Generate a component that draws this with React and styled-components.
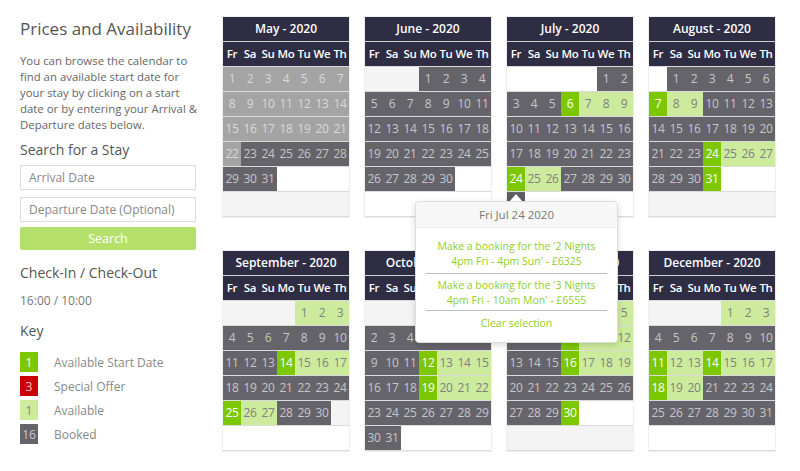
import React from 'react';
import styled, { createGlobalStyle } from 'styled-components';

const GlobalStyle = createGlobalStyle`
  body {
    margin: 0;
    background: #fff;
    font-family: "Open Sans", "Noto Sans", sans-serif;
  }
`;

const Page = styled.div`
  display: flex;
  gap: 27px;
  padding: 17px 0 0 20px;
  width: 800px;
  height: 471px;
  box-sizing: border-box;
  overflow: hidden;
`;

const Sidebar = styled.aside`
  width: 176px;
  flex-shrink: 0;
  color: #666;
`;

const Title = styled.h1`
  margin: 0 0 12px;
  font-size: 17px;
  font-weight: 400;
  color: #555;
  line-height: 24px;
`;

const Intro = styled.p`
  margin: 0 -3px 7px 0;
  font-size: 11.4px;
  line-height: 16px;
  color: #666;
`;

const Heading = styled.h2`
  margin: ${(p) => p.$m || '0'};
  font-size: 14px;
  font-weight: 400;
  color: #555;
  line-height: 20px;
`;

const Field = styled.div`
  height: 25px;
  border: 1px solid #ddd;
  box-sizing: border-box;
  margin-bottom: ${(p) => p.$gap}px;
  padding: 0 8px;
  font-size: 12px;
  line-height: 23px;
  color: #888;
`;

const SearchButton = styled.button`
  display: block;
  width: 100%;
  height: 23px;
  border: none;
  border-radius: 2px;
  background: #b5e06a;
  color: #fff;
  font-family: inherit;
  font-size: 12.5px;
  padding: 0;
`;

const Times = styled.div`
  font-size: 12px;
  line-height: 16px;
  color: #777;
  margin: 0 0 12px;
`;

const KeyList = styled.ul`
  list-style: none;
  margin: 0;
  padding: 0;
  display: flex;
  flex-direction: column;
  gap: 4px;
`;

const KeyRow = styled.li`
  display: flex;
  align-items: center;
  gap: 16px;
  font-size: 12px;
  color: #888;
`;

const colors = {
  start: { bg: '#7cc700', fg: '#fff' },
  offer: { bg: '#cc0008', fg: '#f3c9c9' },
  avail: { bg: '#cdeb9c', fg: '#808080' },
  booked: { bg: '#66646b', fg: '#c6c6c8' },
  past: { bg: '#a4a4a4', fg: '#d9d9d9' },
  empty: { bg: '#f4f4f4', fg: '#f4f4f4' },
  blank: { bg: '#fff', fg: '#fff' },
};

const Swatch = styled.span`
  width: 18px;
  height: 20px;
  display: flex;
  align-items: center;
  justify-content: center;
  background: ${(p) => colors[p.$kind].bg};
  color: ${(p) => colors[p.$kind].fg};
  font-size: 12px;
`;

const Calendars = styled.div`
  position: relative;
  display: grid;
  grid-template-columns: repeat(4, 126px);
  column-gap: 16px;
  row-gap: 34px;
  align-content: start;
`;

const Month = styled.div`
  width: 126px;
  box-shadow: 0 0 0 1px #eee;
`;

const MonthTitle = styled.div`
  height: 24px;
  border-bottom: 1px solid #d0d0d4;
  background: #2e2d44;
  color: #fff;
  font-size: 12px;
  font-weight: 600;
  text-align: center;
  line-height: 24px;
`;

const Week = styled.div`
  display: grid;
  grid-template-columns: repeat(7, 18px);
  height: 24px;
  border-bottom: 1px solid #dadada;
`;

const DayName = styled.div`
  background: #2e2d44;
  color: #fff;
  font-size: 11.5px;
  font-weight: 600;
  text-align: center;
  line-height: 24px;
  letter-spacing: -0.3px;
`;

const Day = styled.div`
  background: ${(p) => colors[p.$kind].bg};
  color: ${(p) => colors[p.$kind].fg};
  font-size: 12px;
  text-align: center;
  line-height: 24px;
  letter-spacing: -0.3px;
`;

const Popover = styled.div`
  position: absolute;
  left: 192px;
  top: 184px;
  width: 201px;
  background: #fff;
  border: 1px solid #ddd;
  border-radius: 4px;
  box-shadow: 0 2px 6px rgba(0, 0, 0, 0.15);
  z-index: 2;
`;

const Notch = styled.div`
  position: absolute;
  left: 284px;
  top: 176px;
  width: 18px;
  height: 8px;
  background: #5e5c63;
  z-index: 3;
  &::after {
    content: '';
    position: absolute;
    left: 3px;
    bottom: 0;
    border-left: 6px solid transparent;
    border-right: 6px solid transparent;
    border-bottom: 7px solid #fff;
  }
`;

const PopoverTitle = styled.div`
  height: 25px;
  background: #f7f7f7;
  border-bottom: 1px solid #eee;
  border-radius: 4px 4px 0 0;
  font-size: 11.5px;
  color: #777;
  text-align: center;
  line-height: 25px;
`;

const PopoverBody = styled.div`
  padding: 11px 10px 9px;
  display: flex;
  flex-direction: column;
`;

const Option = styled.a`
  display: block;
  color: #8fcf2a;
  font-size: 10.5px;
  line-height: 15px;
  text-align: center;
  padding: ${(p) => (p.$first ? '0 0 4px' : '4px 0 2px')};
  border-bottom: ${(p) => (p.$last ? 'none' : '1px solid #bbb')};
  text-decoration: none;
  ${(p) => p.$last && 'padding-top: 5px;'}
`;

const monthsData = [
  { name: 'May', start: 0, days: 31, fill: ['', '', '', '', 'blank', 'empty'],
    past: [1, 22], start_: [], avail: [] },
  { name: 'June', start: 3, days: 30, fill: ['empty', '', '', '', 'blank', 'blank'],
    start_: [], avail: [] },
  { name: 'July', start: 5, days: 31, fill: ['blank', '', '', '', 'blank', 'blank'],
    start_: [6, 24], avail: [7, 8, 9, 25, 26] },
  { name: 'August', start: 1, days: 31, fill: ['blank', '', '', '', 'blank', 'empty'],
    start_: [7, 24, 31], avail: [8, 9, 25, 26, 27] },
  { name: 'September', start: 4, days: 30, fill: ['empty', '', '', '', 'empty', 'blank'],
    start_: [14, 25], avail: [1, 2, 3, 15, 16, 17, 26, 27] },
  { name: 'October', start: 6, days: 31, fill: ['empty', '', '', '', '', 'blank'],
    start_: [12, 19], avail: [13, 14, 15, 20, 21, 22] },
  { name: 'November', start: 2, days: 30, fill: ['blank', '', '', '', 'blank', 'empty'],
    start_: [2, 9, 16, 30], avail: [1, 3, 4, 5, 10, 11, 12, 17, 18, 19] },
  { name: 'December', start: 4, days: 31, fill: ['empty', '', '', '', '', 'blank'],
    start_: [11, 14, 18], avail: [1, 2, 3, 12, 13, 15, 16, 17, 19, 20] },
];

const dayNames = ['Fr', 'Sa', 'Su', 'Mo', 'Tu', 'We', 'Th'];

function kindOf(m, d) {
  if (m.past && d >= m.past[0] && d <= m.past[1]) return 'past';
  if (m.start_.includes(d)) return 'start';
  if (m.avail.includes(d)) return 'avail';
  return 'booked';
}

function buildWeeks(m) {
  const weeks = [];
  for (let r = 0; r < 6; r++) {
    const row = [];
    for (let c = 0; c < 7; c++) {
      const d = r * 7 + c - m.start + 1;
      if (d < 1 || d > m.days) row.push({ key: c, kind: m.fill[r] || 'blank', label: '' });
      else row.push({ key: c, kind: kindOf(m, d), label: d });
    }
    weeks.push(row);
  }
  return weeks;
}

const MonthCalendar = ({ m }) => (
  <Month>
    <MonthTitle>{m.name} - 2020</MonthTitle>
    <Week>
      {dayNames.map((n) => (
        <DayName key={n}>{n}</DayName>
      ))}
    </Week>
    {buildWeeks(m).map((row, i) => (
      <Week key={i}>
        {row.map((c) => (
          <Day key={c.key} $kind={c.kind}>
            {c.label}
          </Day>
        ))}
      </Week>
    ))}
  </Month>
);

const keyItems = [
  { kind: 'start', n: 1, label: 'Available Start Date' },
  { kind: 'offer', n: 3, label: 'Special Offer' },
  { kind: 'avail', n: 1, label: 'Available' },
  { kind: 'booked', n: 16, label: 'Booked' },
];

export default function App() {
  return (
    <>
      <GlobalStyle />
      <Page>
        <Sidebar>
          <Title>Prices and Availability</Title>
          <Intro>
            You can browse the calendar to find an available start date for your
            stay by clicking on a start date or by entering your Arrival &amp;
            Departure dates below.
          </Intro>
          <Heading $m="0 0 5px">Search for a Stay</Heading>
          <Field $gap={7}>Arrival Date</Field>
          <Field $gap={5}>Departure Date (Optional)</Field>
          <SearchButton>Search</SearchButton>
          <Heading $m="13px 0 10px">Check-In / Check-Out</Heading>
          <Times>16:00 / 10:00</Times>
          <Heading $m="0 0 11px">Key</Heading>
          <KeyList>
            {keyItems.map((k) => (
              <KeyRow key={k.label}>
                <Swatch $kind={k.kind}>{k.n}</Swatch>
                {k.label}
              </KeyRow>
            ))}
          </KeyList>
        </Sidebar>
        <Calendars>
          {monthsData.map((m) => (
            <MonthCalendar key={m.name} m={m} />
          ))}
          <Notch />
          <Popover>
            <PopoverTitle>Fri Jul 24 2020</PopoverTitle>
            <PopoverBody>
              <Option $first>
                Make a booking for the '2 Nights
                <br />
                4pm Fri - 4pm Sun' - £6325
              </Option>
              <Option>
                Make a booking for the '3 Nights
                <br />
                4pm Fri - 10am Mon' - £6555
              </Option>
              <Option $last>Clear selection</Option>
            </PopoverBody>
          </Popover>
        </Calendars>
      </Page>
    </>
  );
}
